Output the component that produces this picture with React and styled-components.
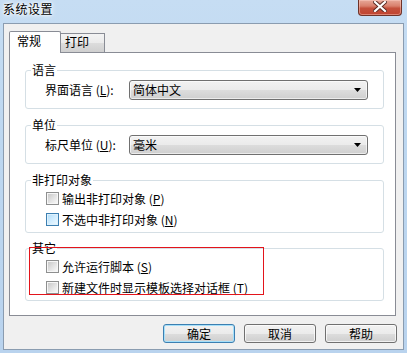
import React from 'react';
import styled, { createGlobalStyle } from 'styled-components';

const Global = createGlobalStyle`
  html, body { margin: 0; padding: 0; background: #fff; }
  body { font-family: "Noto Sans CJK SC", "Liberation Sans", sans-serif; font-size: 12px; color: #000; }
  * { box-sizing: border-box; }
`;

const Window = styled.div`
  position: relative;
  width: 407px;
  height: 353px;
  padding: 0 3px 3px;
  background: linear-gradient(180deg, #c6ddf3 0%, #bdd7f0 40%, #b9d3ee 100%);
  display: flex;
  flex-direction: column;
  overflow: hidden;
`;

const TitleBar = styled.div`
  height: 23px;
  flex: none;
  display: flex;
  justify-content: space-between;
  align-items: flex-start;
`;

const Title = styled.div`
  margin-top: 2px;
  line-height: 14px;
  font-size: 12px;
  letter-spacing: 0.5px;
  color: #000;
  text-shadow: 0 0 6px #fff, 0 0 4px #fff, 0 0 2px #fff;
`;

const CloseButton = styled.div`
  width: 44px;
  height: 16px;
  margin-right: 2px;
  border: 1px solid #6e3228;
  border-top: none;
  border-radius: 0 0 4px 4px;
  background: linear-gradient(180deg, #e7a899 0%, #d9806d 40%, #c4503c 55%, #c0432f 100%);
  box-shadow: inset 0 0 0 1px rgba(255, 210, 200, 0.45);
  display: flex;
  justify-content: center;
  align-items: flex-start;
  padding-top: 1px;
`;

const Client = styled.div`
  flex: 1;
  background: #f0f0f0;
  border: 1px solid #8a9cb0;
  padding: 7px 6px 0 5px;
  display: flex;
  flex-direction: column;
`;

const TabRow = styled.div`
  display: flex;
  align-items: flex-end;
  height: 21px;
`;

const Tab = styled.div`
  border: 1px solid #898c95;
  border-bottom: none;
  line-height: 14px;
  font-size: 12px;
  ${p => p.$active ? `
    width: 52px;
    height: 22px;
    margin-bottom: -1px;
    background: #fff;
    position: relative;
    z-index: 1;
    padding: 2px 0 0 7px;
    border-radius: 2px 2px 0 0;
  ` : `
    width: 45px;
    height: 19px;
    margin-left: -1px;
    background: linear-gradient(180deg, #f3f3f3 0%, #ebebeb 50%, #dddddd 50%, #cfcfcf 100%);
    padding: 1px 0 0 4px;
  `}
`;

const Panel = styled.div`
  margin-right: 1px;
  border: 1px solid #898c95;
  background: #fff;
  padding: 10px 11px 14px 15px;
  display: flex;
  flex-direction: column;
`;

const Group = styled.fieldset`
  margin: ${p => p.$gap || 0}px 0 0;
  padding: 0;
  border: 1px solid #d5dfe5;
  border-radius: 3px;
  min-width: 0;
`;

const Legend = styled.legend`
  margin-left: 5px;
  padding: 0 1px;
  line-height: 14px;
  font-size: 12px;
`;

const GroupBody = styled.div`
  padding: ${p => p.$top}px 0 ${p => p.$bottom}px 19px;
`;

const SelectRow = styled.div`
  display: flex;
  align-items: center;
  height: 20px;
`;

const FieldLabel = styled.span`
  width: 84px;
  line-height: 14px;
  white-space: nowrap;
`;

const Select = styled.div`
  width: 239px;
  height: 20px;
  border: 1px solid #707070;
  border-radius: 3px;
  background: linear-gradient(180deg, #f2f2f2 0%, #ebebeb 50%, #dddddd 50%, #cfcfcf 100%);
  box-shadow: inset 0 0 0 1px rgba(255, 255, 255, 0.6);
  display: flex;
  align-items: center;
  justify-content: space-between;
  padding: 0 6px 0 3px;
  line-height: 14px;
`;

const CheckRow = styled.div`
  display: flex;
  align-items: center;
  height: 21px;
  padding-left: 1px;
`;

const Box = styled.span`
  width: 13px;
  height: 13px;
  flex: none;
  border: 1px solid ${p => p.$hover ? '#3c7fb1' : '#8e8f8f'};
  padding: 1px;
  background: ${p => p.$hover
    ? 'linear-gradient(135deg, #b6e0fb 0%, #d6efff 60%, #eaf7ff 100%) content-box, #def1fc'
    : 'linear-gradient(135deg, #c9c9c9 0%, #e6e6e6 60%, #f8f8f8 100%) content-box, #f6f6f6'};
`;

const CheckText = styled.span`
  margin-left: 3px;
  line-height: 14px;
  white-space: nowrap;
`;

const ButtonRow = styled.div`
  display: flex;
  justify-content: flex-end;
  gap: 9px;
  margin-top: 8px;
`;

const Button = styled.div`
  width: 72px;
  height: 19px;
  border: 1px solid ${p => p.$primary ? '#3c7fb1' : '#707070'};
  border-radius: 3px;
  background: linear-gradient(180deg, #f2f2f2 0%, #ebebeb 50%, #dddddd 50%, #cfcfcf 100%);
  box-shadow: inset 0 0 0 1px ${p => p.$primary ? '#a6e0fa' : 'rgba(255,255,255,0.7)'};
  display: flex;
  align-items: center;
  justify-content: center;
  line-height: 14px;
`;

const Highlight = styled.div`
  position: absolute;
  left: 29px;
  top: 247px;
  width: 235px;
  height: 48px;
  border: 1px solid #e3141b;
  pointer-events: none;
`;

const Arrow = () => (
  <svg width="7" height="4" viewBox="0 0 7 4"><path d="M0 0H7L3.5 4Z" fill="#000" /></svg>
);

const CloseX = () => (
  <svg width="14" height="11" viewBox="0 0 14 11">
    <path d="M2 1L12 10M12 1L2 10" stroke="#5a2a22" strokeWidth="4" strokeLinecap="square" />
    <path d="M2 1L12 10M12 1L2 10" stroke="#fff" strokeWidth="2.2" strokeLinecap="square" />
  </svg>
);

const SelectField = ({ label, mnemonic, value }) => (
  <SelectRow>
    <FieldLabel>{label} (<u>{mnemonic}</u>):</FieldLabel>
    <Select><span>{value}</span><Arrow /></Select>
  </SelectRow>
);

const Check = ({ text, mnemonic, hover }) => (
  <CheckRow>
    <Box $hover={hover} />
    <CheckText>{text} (<u>{mnemonic}</u>)</CheckText>
  </CheckRow>
);

export default function App() {
  return (
    <>
      <Global />
      <Window>
        <TitleBar>
          <Title>系统设置</Title>
          <CloseButton><CloseX /></CloseButton>
        </TitleBar>
        <Client>
          <TabRow>
            <Tab $active>常规</Tab>
            <Tab>打印</Tab>
          </TabRow>
          <Panel>
            <Group>
              <Legend>语言</Legend>
              <GroupBody $top={3} $bottom={8}>
                <SelectField label="界面语言" mnemonic="L" value="简体中文" />
              </GroupBody>
            </Group>
            <Group $gap={9}>
              <Legend>单位</Legend>
              <GroupBody $top={3} $bottom={8}>
                <SelectField label="标尺单位" mnemonic="U" value="毫米" />
              </GroupBody>
            </Group>
            <Group $gap={9}>
              <Legend>非打印对象</Legend>
              <GroupBody $top={1} $bottom={2}>
                <Check text="输出非打印对象" mnemonic="P" />
                <Check text="不选中非打印对象" mnemonic="N" hover />
              </GroupBody>
            </Group>
            <Group $gap={8}>
              <Legend>其它</Legend>
              <GroupBody $top={1} $bottom={2}>
                <Check text="允许运行脚本" mnemonic="S" />
                <Check text="新建文件时显示模板选择对话框" mnemonic="T" />
              </GroupBody>
            </Group>
          </Panel>
          <ButtonRow>
            <Button $primary>确定</Button>
            <Button>取消</Button>
            <Button>帮助</Button>
          </ButtonRow>
        </Client>
        <Highlight />
      </Window>
    </>
  );
}
